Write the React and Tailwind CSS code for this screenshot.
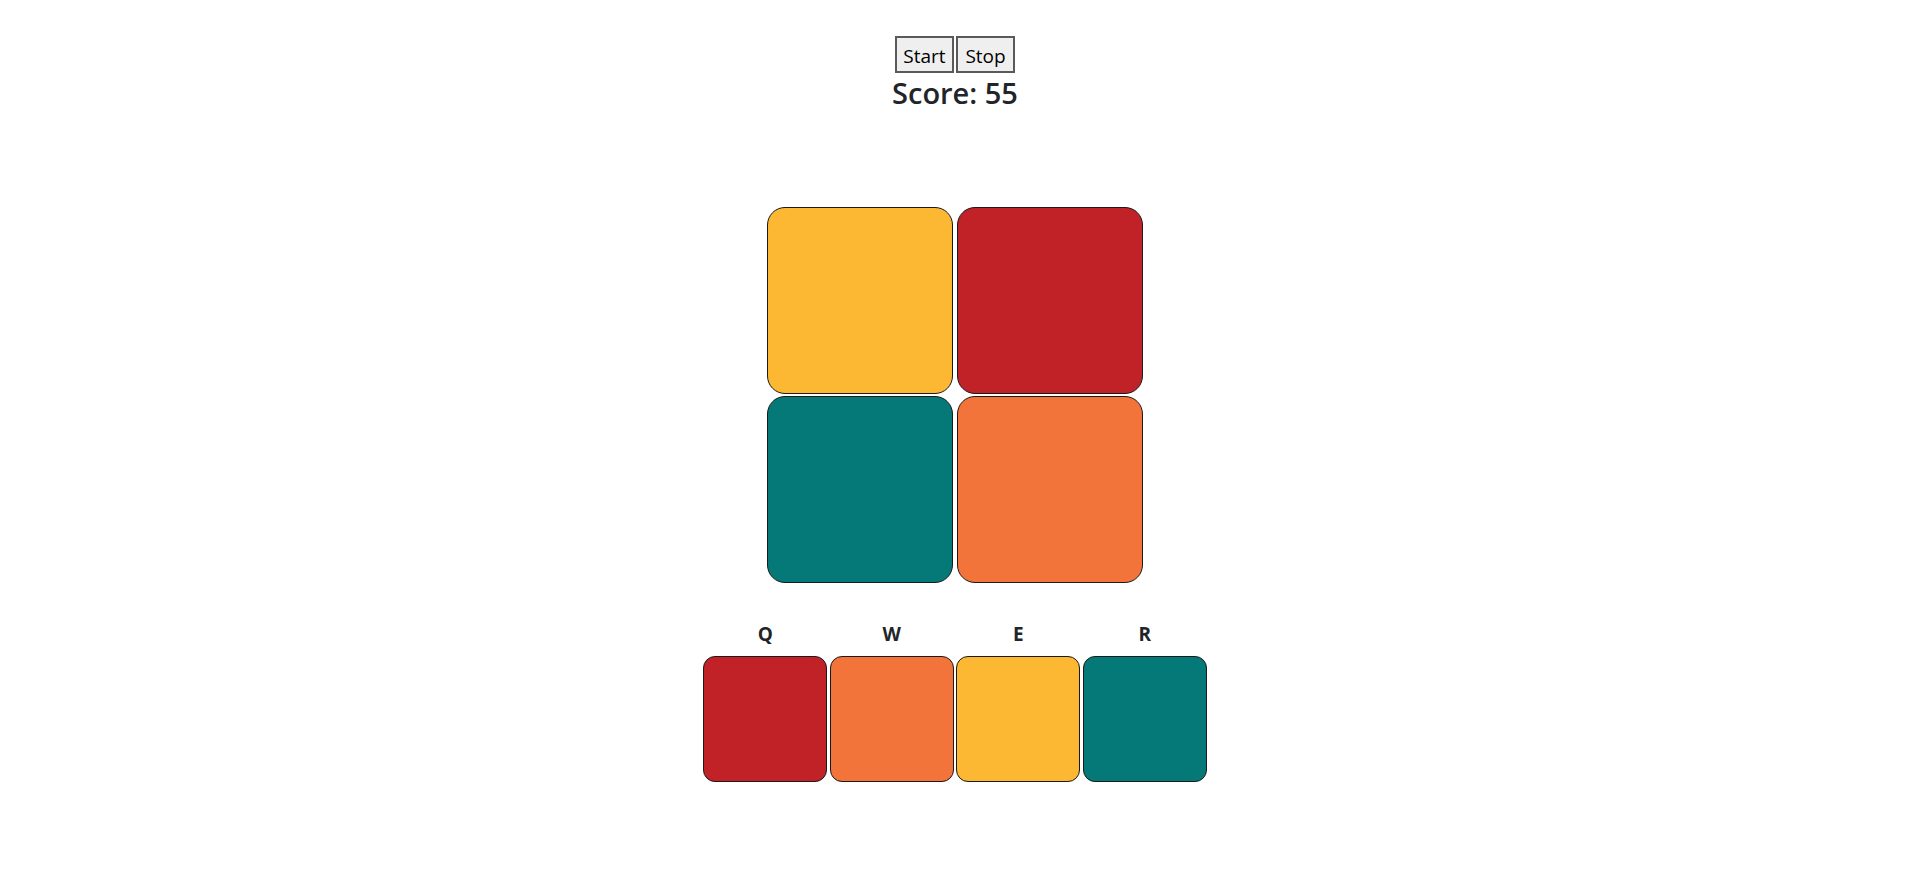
import React, { useState } from 'react';

const boardTiles = ['#fcb733', '#c02228', '#057978', '#f3743a'];

const keyTiles = [
  { key: 'Q', color: '#c02228' },
  { key: 'W', color: '#f3743a' },
  { key: 'E', color: '#fcb733' },
  { key: 'R', color: '#057978' },
];

function App() {
  const [score] = useState(55);

  return (
    <div className="min-h-screen bg-white pr-[9px] font-['Open_Sans','Noto_Sans',sans-serif] text-[#212529]">
      <div className="flex flex-col items-center">
        {/* Controls */}
        <div className="mt-[36px] flex gap-[2px]">
          <button className="h-[37px] w-[59px] border-2 border-[#5a5a5a] bg-[#efefef] pt-[3px] text-[19px] leading-none text-black">
            Start
          </button>
          <button className="h-[37px] w-[59px] border-2 border-[#5a5a5a] bg-[#efefef] pt-[3px] text-[19px] leading-none text-black">
            Stop
          </button>
        </div>
        <h2 className="mt-[2px] text-[29px] font-semibold leading-[36px]">Score: {score}</h2>

        {/* Board */}
        <div className="mt-[96px] grid grid-cols-[186px_186px] gap-x-[4px] gap-y-[2px]">
          {boardTiles.map((color, i) => (
            <div
              key={i}
              className="h-[187px] rounded-[18px] border border-[#1a1a1a]"
              style={{ backgroundColor: color }}
            />
          ))}
        </div>

        {/* Keys */}
        <div className="mt-[37px] flex gap-[2.5px]">
          {keyTiles.map((k) => (
            <div key={k.key} className="flex w-[124px] flex-col items-center">
              <span className="text-[19px] font-bold leading-[28px]">{k.key}</span>
              <div
                className="mt-[8px] h-[126px] w-full rounded-[12px] border border-[#1a1a1a]"
                style={{ backgroundColor: k.color }}
              />
            </div>
          ))}
        </div>
      </div>
    </div>
  );
}

export default App;
